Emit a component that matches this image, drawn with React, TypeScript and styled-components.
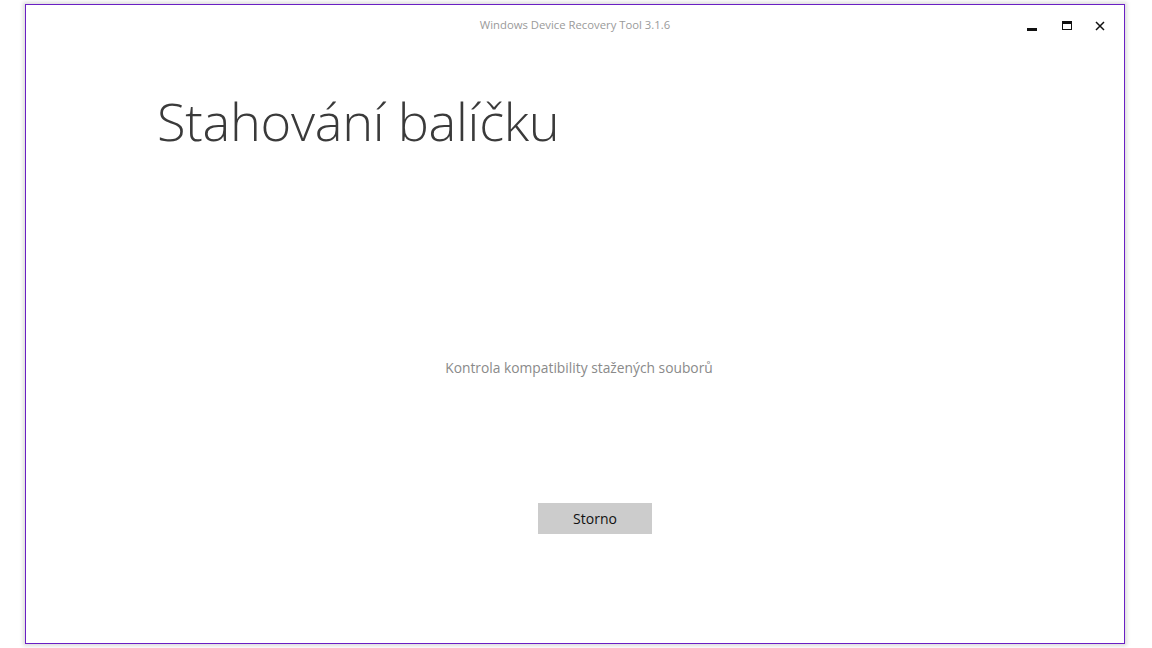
import React from "react";
import styled, {createGlobalStyle} from "styled-components";

const GlobalStyle = createGlobalStyle`
  html, body {
    margin: 0;
    padding: 0;
    background: #ffffff;
  }
  body {
    font-family: "Open Sans", "Noto Sans", "DejaVu Sans", sans-serif;
  }
`

const StyledPage = styled.div`
  width: 1152px;
  height: 648px;
  padding: 4px 0 0 25px;
  box-sizing: border-box;
`

const StyledWindow = styled.div`
  width: 1100px;
  height: 640px;
  box-sizing: border-box;
  border: 1px solid #6a1fc4;
  background: #ffffff;
  box-shadow: 0 0 4px 2px rgba(0, 0, 0, 0.14);
  display: flex;
  flex-direction: column;
`

const StyledTitleBar = styled.div`
  height: 40px;
  display: grid;
  grid-template-columns: 1fr auto 1fr;
  align-items: start;
`

const StyledTitle = styled.div`
  grid-column: 2;
  padding-top: 12px;
  font-size: 11.3px;
  color: #9a9a9a;
`

const StyledControls = styled.div`
  grid-column: 3;
  justify-self: end;
  display: flex;
  align-items: center;
  padding: 13px 8px 0 0;
`

const StyledControlButton = styled.div<{width: number}>`
  width: ${props => props.width}px;
  height: 16px;
  display: flex;
  align-items: center;
  justify-content: center;
`

const StyledHeading = styled.h1`
  margin: 50px 0 0 131px;
  font-size: 52.4px;
  font-weight: 300;
  color: #3a3a3a;
  line-height: 1;
  letter-spacing: -0.3px;
`

const StyledContent = styled.div`
  flex: 1;
  display: flex;
  flex-direction: column;
  align-items: center;
  padding-top: 211px;
`

const StyledStatus = styled.div`
  font-size: 13.8px;
  color: #8a8a8a;
  margin-left: 8px;
`

const StyledButton = styled.button`
  margin-top: 126px;
  margin-left: 40px;
  width: 114px;
  height: 31px;
  border: none;
  background: #cccccc;
  font-family: inherit;
  font-size: 14px;
  font-weight: 500;
  color: #111111;
  cursor: pointer;
  padding: 0;
`

export default function App() {
    return (
        <StyledPage>
            <GlobalStyle/>
            <StyledWindow>
                <StyledTitleBar>
                    <StyledTitle>Windows Device Recovery Tool 3.1.6</StyledTitle>
                    <StyledControls>
                        <StyledControlButton width={36}>
                            <svg width="10" height="10" viewBox="0 0 10 10">
                                <rect x="0" y="7" width="10" height="3" fill="#111"/>
                            </svg>
                        </StyledControlButton>
                        <StyledControlButton width={33}>
                            <svg width="10" height="10" viewBox="0 0 10 10">
                                <rect x="0.5" y="0.5" width="9" height="8" fill="none" stroke="#111"/>
                                <rect x="0" y="0" width="10" height="3" fill="#111"/>
                            </svg>
                        </StyledControlButton>
                        <StyledControlButton width={33}>
                            <svg width="10" height="10" viewBox="0 0 10 10">
                                <path d="M1 1 L9 9 M9 1 L1 9" stroke="#111" strokeWidth="1.5"/>
                            </svg>
                        </StyledControlButton>
                    </StyledControls>
                </StyledTitleBar>
                <StyledHeading>Stahování balíčku</StyledHeading>
                <StyledContent>
                    <StyledStatus>Kontrola kompatibility stažených souborů</StyledStatus>
                    <StyledButton>Storno</StyledButton>
                </StyledContent>
            </StyledWindow>
        </StyledPage>
    );
}
